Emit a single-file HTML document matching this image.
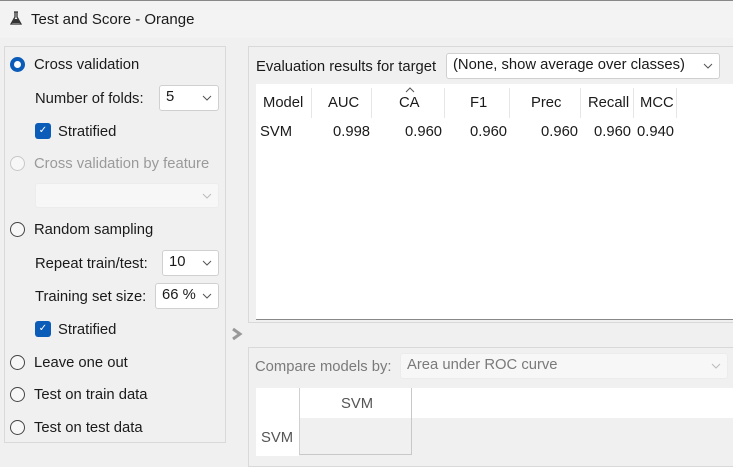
<!DOCTYPE html>
<html><head><meta charset="utf-8"><style>
*{margin:0;padding:0;box-sizing:border-box}
body{width:733px;height:464px;overflow:hidden;background:#f0f0f0;font-family:"Liberation Sans",sans-serif;font-size:14.8px;color:#1a1a1a;position:relative}
.a{position:absolute;white-space:nowrap;line-height:16px}
.box{position:absolute;border:1px solid #d9d9d9}
.radio{position:absolute;width:15px;height:15px;border:1px solid #444;border-radius:50%;background:#f7f7f7}
.radio.on{border:4px solid #0a5cb8;background:#fff}
.radio.dis{border-color:#c8c8c8}
.chk{position:absolute;width:16px;height:16px;background:#0a5cb8;border-radius:3px;color:#fff;font-size:10px;line-height:16px;text-align:center}
.combo{position:absolute;background:#fff;border:1px solid #d0d0d0;border-radius:3px;line-height:23px;padding-left:6px}
.combo svg{position:absolute;right:6px;top:9px}
.sep{position:absolute;width:1px;background:#e6e6e6;top:88px;height:30px}
</style></head><body>
<div style="position:absolute;left:0;top:0;width:733px;height:38px;background:#f3f3f3;border-top:1px solid #888"></div>
<svg style="position:absolute;left:10px;top:11px" width="12" height="15" viewBox="0 0 12 15"><path d="M4 1h4M5 1v5L1 13h10L7 6V1" fill="none" stroke="#333" stroke-width="1.3"/><path d="M2 12l2.5-4h3L10 12z" fill="#333"/></svg>
<div class="a" style="left:31px;top:12px;font-size:15px">Test and Score - Orange</div>

<div class="box" style="left:4px;top:46px;width:222px;height:397px"></div>
<div class="radio on" style="left:10px;top:57px"></div>
<div class="a" style="left:34px;top:57px">Cross validation</div>
<div class="a" style="left:35px;top:91px">Number of folds:</div>
<div class="combo" style="left:159px;top:85px;width:60px;height:26px">5<svg width="10" height="6"><path d="M1 1l4 4 4-4" fill="none" stroke="#555"/></svg></div>
<div class="chk" style="left:35px;top:123px">✓</div>
<div class="a" style="left:58px;top:124px">Stratified</div>
<div class="radio dis" style="left:10px;top:156px"></div>
<div class="a" style="left:34px;top:156px;color:#9a9a9a">Cross validation by feature</div>
<div class="combo" style="left:35px;top:183px;width:184px;height:25px;border-color:#ececec;background:#f7f7f7"><svg width="10" height="6"><path d="M1 1l4 4 4-4" fill="none" stroke="#bbb"/></svg></div>
<div class="radio" style="left:10px;top:222px"></div>
<div class="a" style="left:34px;top:222px">Random sampling</div>
<div class="a" style="left:35px;top:256px">Repeat train/test:</div>
<div class="combo" style="left:162px;top:250px;width:57px;height:26px">10<svg width="10" height="6"><path d="M1 1l4 4 4-4" fill="none" stroke="#555"/></svg></div>
<div class="a" style="left:35px;top:289px">Training set size:</div>
<div class="combo" style="left:155px;top:283px;width:64px;height:26px">66 %<svg width="10" height="6"><path d="M1 1l4 4 4-4" fill="none" stroke="#555"/></svg></div>
<div class="chk" style="left:35px;top:321px">✓</div>
<div class="a" style="left:58px;top:322px">Stratified</div>
<div class="radio" style="left:10px;top:355px"></div>
<div class="a" style="left:34px;top:355px">Leave one out</div>
<div class="radio" style="left:10px;top:387px"></div>
<div class="a" style="left:34px;top:387px">Test on train data</div>
<div class="radio" style="left:10px;top:420px"></div>
<div class="a" style="left:34px;top:420px">Test on test data</div>

<svg style="position:absolute;left:231px;top:327px" width="12" height="14"><path d="M2 2l7 5-7 5" fill="none" stroke="#999" stroke-width="3"/></svg>

<div class="box" style="left:248px;top:46px;width:490px;height:277px"></div>
<div class="a" style="left:256px;top:59px">Evaluation results for target</div>
<div class="combo" style="left:446px;top:53px;width:274px;height:26px">(None, show average over classes)<svg width="10" height="6"><path d="M1 1l4 4 4-4" fill="none" stroke="#555"/></svg></div>
<div style="position:absolute;left:256px;top:84px;width:477px;height:236px;background:#fff;border-bottom:1px solid #888"></div>
<div class="sep" style="left:311px"></div><div class="sep" style="left:371px"></div><div class="sep" style="left:444px"></div><div class="sep" style="left:509px"></div><div class="sep" style="left:580px"></div><div class="sep" style="left:633px"></div><div class="sep" style="left:676px"></div>
<svg style="position:absolute;left:405px;top:87px" width="10" height="6"><path d="M1 5l4-4 4 4" fill="none" stroke="#555"/></svg>
<div class="a" style="left:263px;top:95px">Model</div>
<div class="a" style="left:328px;top:95px">AUC</div>
<div class="a" style="left:399px;top:95px">CA</div>
<div class="a" style="left:470px;top:95px">F1</div>
<div class="a" style="left:531px;top:95px">Prec</div>
<div class="a" style="left:588px;top:95px">Recall</div>
<div class="a" style="left:640px;top:95px">MCC</div>
<div class="a" style="left:260px;top:124px">SVM</div>
<div class="a" style="left:333px;top:124px">0.998</div>
<div class="a" style="left:405px;top:124px">0.960</div>
<div class="a" style="left:470px;top:124px">0.960</div>
<div class="a" style="left:541px;top:124px">0.960</div>
<div class="a" style="left:594px;top:124px">0.960</div>
<div class="a" style="left:637px;top:124px">0.940</div>

<div class="box" style="left:248px;top:347px;width:490px;height:120px"></div>
<div class="a" style="left:255px;top:359px;color:#7a7a7a">Compare models by:</div>
<div class="combo" style="left:400px;top:353px;width:328px;height:26px;border-color:#ececec;background:#f7f7f7;color:#7a7a7a">Area under ROC curve<svg width="10" height="6"><path d="M1 1l4 4 4-4" fill="none" stroke="#bbb"/></svg></div>
<div style="position:absolute;left:256px;top:388px;width:477px;height:30px;background:#fff"></div>
<div style="position:absolute;left:256px;top:418px;width:43px;height:38px;background:#fff"></div>
<div style="position:absolute;left:299px;top:388px;width:113px;height:67px;border-left:1px solid #d0d0d0;border-right:1px solid #c8c8c8;border-bottom:1px solid #c8c8c8"></div>
<div class="a" style="left:341px;top:396px;color:#555">SVM</div>
<div class="a" style="left:261px;top:430px;color:#555">SVM</div>
</body></html>
